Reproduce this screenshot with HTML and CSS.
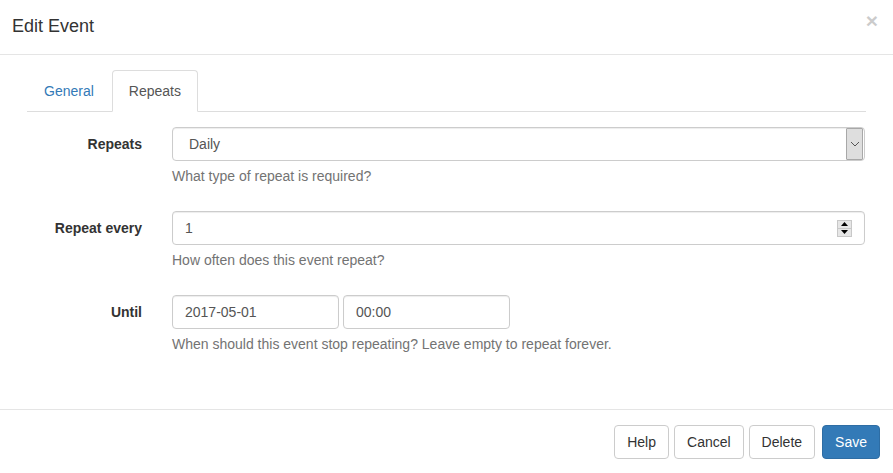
FILE: index.html
```html
<!DOCTYPE html>
<html lang="en">
<head>
    <meta charset="UTF-8">
    <title>Edit Event</title>
    <link rel="stylesheet" href="styles.css">
</head>
<body>
    <div class="modal">
        <div class="modal-header">
            <h4 class="modal-title">Edit Event</h4>
            <span class="close">&times;</span>
        </div>

        <div class="modal-body">
            <ul class="nav-tabs">
                <li><a href="#">General</a></li>
                <li class="active"><a href="#">Repeats</a></li>
            </ul>

            <div class="tab-content">
                <div class="form-group">
                    <label>Repeats</label>
                    <div class="controls">
                        <div class="select">
                            <span>Daily</span>
                            <span class="select-arrow">
                                <svg width="10" height="6" viewBox="0 0 10 6"><path d="M1 1 L5 5 L9 1" fill="none" stroke="#555" stroke-width="1"/></svg>
                            </span>
                        </div>
                        <p class="help-block">What type of repeat is required?</p>
                    </div>
                </div>

                <div class="form-group">
                    <label>Repeat every</label>
                    <div class="controls">
                        <div class="form-control number">
                            <span>1</span>
                            <span class="spinner">
                                <span class="spin-btn"><svg width="7" height="4" viewBox="0 0 7 4"><path d="M0 4 L3.5 0 L7 4 Z" fill="#000"/></svg></span>
                                <span class="spin-btn"><svg width="7" height="4" viewBox="0 0 7 4"><path d="M0 0 L3.5 4 L7 0 Z" fill="#000"/></svg></span>
                            </span>
                        </div>
                        <p class="help-block">How often does this event repeat?</p>
                    </div>
                </div>

                <div class="form-group">
                    <label>Until</label>
                    <div class="controls">
                        <div class="inline-inputs">
                            <div class="form-control short">2017-05-01</div>
                            <div class="form-control short">00:00</div>
                        </div>
                        <p class="help-block">When should this event stop repeating? Leave empty to repeat forever.</p>
                    </div>
                </div>
            </div>
        </div>

        <div class="modal-footer">
            <button class="btn">Help</button>
            <button class="btn">Cancel</button>
            <button class="btn">Delete</button>
            <button class="btn btn-primary">Save</button>
        </div>
    </div>
</body>
</html>
```

FILE: styles.css
```css
body {
    margin: 0;
    font-family: "Liberation Sans", Arial, sans-serif;
    font-size: 14px;
    line-height: 20px;
    color: #333;
    background-color: #fff;
}
.modal {
    width: 893px;
    height: 473px;
    overflow: hidden;
}
.modal-header {
    display: flex;
    justify-content: space-between;
    align-items: flex-start;
    height: 54px;
    padding: 0 15px 0 12px;
    border-bottom: 1px solid #e5e5e5;
}
.modal-title {
    margin: 0;
    padding-top: 14px;
    font-size: 18px;
    font-weight: normal;
    line-height: 25px;
}
.close {
    margin-top: 10px;
    font-size: 21px;
    font-weight: bold;
    line-height: 21px;
    color: #000;
    opacity: 0.2;
}
.modal-body {
    padding: 15px 27px 15px 27px;
}
.nav-tabs {
    display: flex;
    margin: 0;
    padding: 0;
    list-style: none;
    border-bottom: 1px solid #ddd;
}
.nav-tabs li {
    margin-right: 2px;
    margin-bottom: -1px;
}
.nav-tabs a {
    display: block;
    padding: 10px 15px 10px 16px;
    line-height: 20px;
    color: #337ab7;
    text-decoration: none;
    border: 1px solid transparent;
    border-radius: 4px 4px 0 0;
}
.nav-tabs .active a {
    padding: 10px 16px;
    color: #555;
    background-color: #fff;
    border-color: #ddd #ddd transparent;
}
.tab-content {
    padding-top: 15px;
}
.form-group {
    display: grid;
    grid-template-columns: 115px 1fr;
    column-gap: 30px;
    margin-bottom: 15px;
}
.form-group label {
    padding-top: 7px;
    text-align: right;
    font-weight: bold;
}
.controls {
    margin-right: 1px;
}
.form-control,
.select {
    box-sizing: border-box;
    height: 34px;
    padding: 6px 12px;
    color: #555;
    border: 1px solid #ccc;
    border-radius: 4px;
    box-shadow: inset 0 1px 1px rgba(0,0,0,0.075);
}
.select {
    display: flex;
    justify-content: space-between;
    padding: 0 0 0 16px;
    align-items: center;
}
.select-arrow {
    display: flex;
    align-items: center;
    justify-content: center;
    width: 17px;
    height: 32px;
    margin-right: 1px;
    background-color: #dedede;
    border: 1px solid #a8a8a8;
    border-radius: 1px;
    box-sizing: border-box;
}
.number {
    display: flex;
    justify-content: space-between;
    align-items: center;
    padding-right: 12px;
}
.spinner {
    display: flex;
    flex-direction: column;
    gap: 1px;
    padding: 1px;
    background-color: #c8c8c8;
}
.spin-btn {
    display: flex;
    align-items: center;
    justify-content: center;
    width: 13px;
    height: 7px;
    background-color: #e6e6e6;
}
.inline-inputs {
    display: flex;
    gap: 4px;
}
.short {
    width: 167px;
}
.help-block {
    margin: 5px 0 10px;
    color: #737373;
}
.modal-footer {
    display: flex;
    justify-content: flex-end;
    gap: 5px;
    margin-top: 15px;
    padding: 15px 13px;
    border-top: 1px solid #e5e5e5;
}
.btn {
    height: 34px;
    padding: 6px 12px;
    font-family: inherit;
    font-size: 14px;
    line-height: 20px;
    color: #333;
    background-color: #fff;
    border: 1px solid #ccc;
    border-radius: 4px;
}
.btn-primary {
    margin-left: 2px;
    color: #fff;
    background-color: #337ab7;
    border-color: #2e6da4;
}
```
